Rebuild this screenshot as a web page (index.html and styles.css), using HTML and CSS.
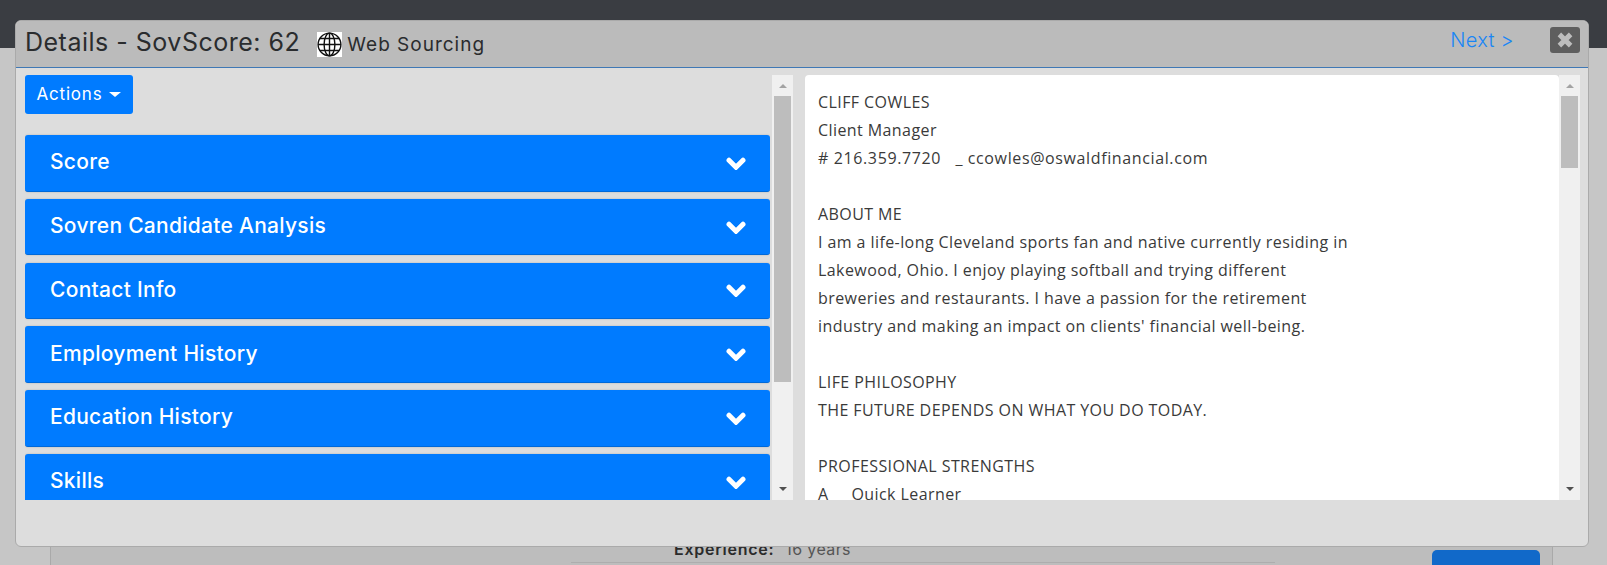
FILE: index.html
```html
<!DOCTYPE html>
<html lang="en">
<head>
    <meta charset="UTF-8">
    <meta name="viewport" content="width=device-width, initial-scale=1.0">
    <title>Details</title>
    <link rel="stylesheet" href="styles.css">
</head>
<body>
    <svg class="defs" width="0" height="0">
        <symbol id="chevron" viewBox="0 0 20 13">
            <path d="M3 3.2l7 7 7-7" fill="none" stroke="#fff" stroke-width="5" stroke-linecap="round"/>
        </symbol>
    </svg>

    <div class="topbar"></div>
    <div class="page">
        <div class="card">
            <div class="exp-row"><b>Experience:</b> <span>16 years</span></div>
            <div class="apply-btn"></div>
        </div>
    </div>

    <div class="modal">
        <div class="modal-header">
            <span class="modal-title">Details - SovScore: 62</span>
            <svg class="globe" viewBox="0 0 25 25">
                <rect width="25" height="25" fill="#fff"/>
                <g fill="none" stroke="#111" stroke-width="1.4">
                    <circle cx="12.5" cy="12.5" r="11.4"/>
                    <ellipse cx="12.5" cy="12.5" rx="5.4" ry="11.4"/>
                    <path d="M12.5 1v23M1.1 12.5h22.8M3 6.5h19M3 18.5h19"/>
                </g>
            </svg>
            <span class="source">Web Sourcing</span>
            <a class="next-link">Next &gt;</a>
            <button class="close-btn">
                <svg viewBox="0 0 16 16" width="18" height="18">
                    <path d="M3 3l10 10M13 3L3 13" stroke="#bdbdbd" stroke-width="4.4" fill="none"/>
                </svg>
            </button>
        </div>
        <div class="modal-body">
            <div class="left-col">
                <div class="left-inner">
                    <button class="actions-btn">Actions<i class="caret"></i></button>
                    <div class="acc-list">
                        <div class="acc-item"><span>Score</span><svg class="chev"><use href="#chevron"/></svg></div>
                        <div class="acc-item"><span>Sovren Candidate Analysis</span><svg class="chev"><use href="#chevron"/></svg></div>
                        <div class="acc-item"><span>Contact Info</span><svg class="chev"><use href="#chevron"/></svg></div>
                        <div class="acc-item"><span>Employment History</span><svg class="chev"><use href="#chevron"/></svg></div>
                        <div class="acc-item"><span>Education History</span><svg class="chev"><use href="#chevron"/></svg></div>
                        <div class="acc-item"><span>Skills</span><svg class="chev"><use href="#chevron"/></svg></div>
                    </div>
                </div>
                <div class="scrollbar">
                    <i class="arrow-up"></i>
                    <div class="track"><div class="thumb thumb-left"></div></div>
                    <i class="arrow-down"></i>
                </div>
            </div>
            <div class="right-col">
                <div class="resume">
                    <p>CLIFF COWLES</p>
                    <p>Client Manager</p>
                    <p class="contact-line"># 216.359.7720 &nbsp; _ ccowles@oswaldfinancial.com</p>
                    <p>&nbsp;</p>
                    <p>ABOUT ME</p>
                    <p>I am a life-long Cleveland sports fan and native currently residing in</p>
                    <p>Lakewood, Ohio. I enjoy playing softball and trying different</p>
                    <p>breweries and restaurants. I have a passion for the retirement</p>
                    <p>industry and making an impact on clients' financial well-being.</p>
                    <p>&nbsp;</p>
                    <p>LIFE PHILOSOPHY</p>
                    <p>THE FUTURE DEPENDS ON WHAT YOU DO TODAY.</p>
                    <p>&nbsp;</p>
                    <p>PROFESSIONAL STRENGTHS</p>
                    <p>A &nbsp;&nbsp;&nbsp; Quick Learner</p>
                </div>
                <div class="scrollbar">
                    <i class="arrow-up"></i>
                    <div class="track"><div class="thumb thumb-right"></div></div>
                    <i class="arrow-down"></i>
                </div>
            </div>
        </div>
    </div>
</body>
</html>
```

FILE: styles.css
```css
body {
    margin: 0;
    height: 565px;
    overflow: hidden;
    background: #c6c6c6;
    font-family: "Open Sans", sans-serif;
    color: #333;
}

.defs {
    position: absolute;
}

.topbar {
    height: 48px;
    background: #3a3d42;
}

.page {
    padding: 0 54px 0 50px;
}

.card {
    height: 517px;
    box-sizing: border-box;
    background: #bdbdbd;
    border-left: 1px solid #a9a9a9;
    border-right: 1px solid #a9a9a9;
    position: relative;
}

.exp-row {
    position: absolute;
    top: 491px;
    left: 520px;
    width: 704px;
    height: 24px;
    box-sizing: border-box;
    padding-left: 103px;
    border-bottom: 1px solid #adadad;
    font-family: Inter, sans-serif;
    font-size: 16px;
    line-height: 20px;
    letter-spacing: 0.4px;
    color: #555;
}

.exp-row b {
    color: #2b2b2b;
    font-weight: 600;
    letter-spacing: 0.75px;
    margin-right: 6px;
}

.apply-btn {
    position: absolute;
    top: 502px;
    left: 1381px;
    width: 108px;
    height: 30px;
    background: #1169c9;
    border-radius: 5px 5px 0 0;
}

.modal {
    position: absolute;
    top: 20px;
    left: 15px;
    width: 1574px;
    height: 527px;
    box-sizing: border-box;
    background: #ddd;
    border: 1px solid #aaa;
    border-radius: 6px;
    overflow: hidden;
}

.modal-header {
    height: 46px;
    background: #bbb;
    border-bottom: 1px solid #3f78b5;
    display: flex;
    align-items: center;
    padding: 0 8px 0 9px;
    font-family: Inter, sans-serif;
}

.modal-title {
    font-size: 25px;
    letter-spacing: 0.5px;
    margin-top: -4px;
    color: #2a2c2e;
}

.globe {
    width: 25px;
    height: 25px;
    margin-left: 17px;
    flex-shrink: 0;
}

.source {
    font-size: 19px;
    letter-spacing: 1px;
    margin-left: 5px;
    color: #2a2c2e;
}

.next-link {
    margin-left: auto;
    margin-right: 36px;
    margin-top: -9px;
    font-size: 20px;
    font-weight: 300;
    letter-spacing: 0.3px;
    color: #1a86f5;
}

.close-btn {
    width: 30px;
    height: 26px;
    margin-top: -8px;
    padding: 0;
    border: none;
    border-radius: 3px;
    background: #5e5e5e;
    display: flex;
    align-items: center;
    justify-content: center;
}

.modal-body {
    display: flex;
    height: 425px;
    margin-top: 7px;
    padding-left: 9px;
}

.left-col {
    width: 768px;
    display: flex;
    flex-shrink: 0;
}

.left-inner {
    width: 745px;
    overflow: hidden;
}

.actions-btn {
    width: 108px;
    height: 39px;
    padding: 0 0 2px;
    border: none;
    border-radius: 3px;
    background: #007bff;
    color: #fff;
    font-family: Inter, sans-serif;
    font-size: 17px;
    letter-spacing: 0.8px;
}

.caret {
    display: inline-block;
    margin-left: 7px;
    vertical-align: 3px;
    border-top: 5px solid #fff;
    border-left: 6px solid transparent;
    border-right: 6px solid transparent;
}

.acc-list {
    margin-top: 21px;
    display: flex;
    flex-direction: column;
    gap: 7.25px;
}

.acc-item {
    height: 56.5px;
    flex-shrink: 0;
    background: #007bff;
    border-radius: 3px;
    border-bottom: 1px solid #0069d9;
    box-sizing: border-box;
    box-shadow: 0 0 2px rgba(0, 0, 0, 0.2);
    display: flex;
    align-items: center;
    justify-content: space-between;
    padding: 0 24px 2px 25px;
    color: #fff;
    font-family: Inter, sans-serif;
    font-size: 21px;
    font-weight: 500;
    letter-spacing: 0.28px;
}

.chev {
    width: 20px;
    height: 13px;
    margin-top: 3px;
}

.scrollbar {
    width: 21px;
    margin-left: 2px;
    background: #f0f0f0;
    display: flex;
    flex-direction: column;
    align-items: center;
    flex-shrink: 0;
}

.arrow-up,
.arrow-down {
    width: 0;
    height: 0;
    border-left: 4px solid transparent;
    border-right: 4px solid transparent;
    flex-shrink: 0;
}

.arrow-up {
    margin-top: 9px;
    border-bottom: 4px solid #a3a3a3;
}

.arrow-down {
    margin-bottom: 9px;
    border-top: 4px solid #505050;
}

.track {
    flex: 1;
    width: 17px;
    margin-top: 8px;
    margin-bottom: 12px;
}

.thumb {
    background: #bdbdbd;
}

.thumb-left {
    height: 286px;
}

.thumb-right {
    height: 72px;
}

.right-col {
    width: 775px;
    margin-left: 12px;
    display: flex;
}

.resume {
    width: 754px;
    box-sizing: border-box;
    padding: 13px 13px 0;
    background: #fff;
    border-radius: 4px 4px 0 0;
    overflow: hidden;
    font-size: 16px;
    letter-spacing: 0.42px;
    line-height: 28px;
    color: #3a3a3a;
}

.resume p {
    margin: 0;
}

.resume .contact-line {
    letter-spacing: 0.62px;
}

.right-col .scrollbar {
    margin-left: 0;
}
```
